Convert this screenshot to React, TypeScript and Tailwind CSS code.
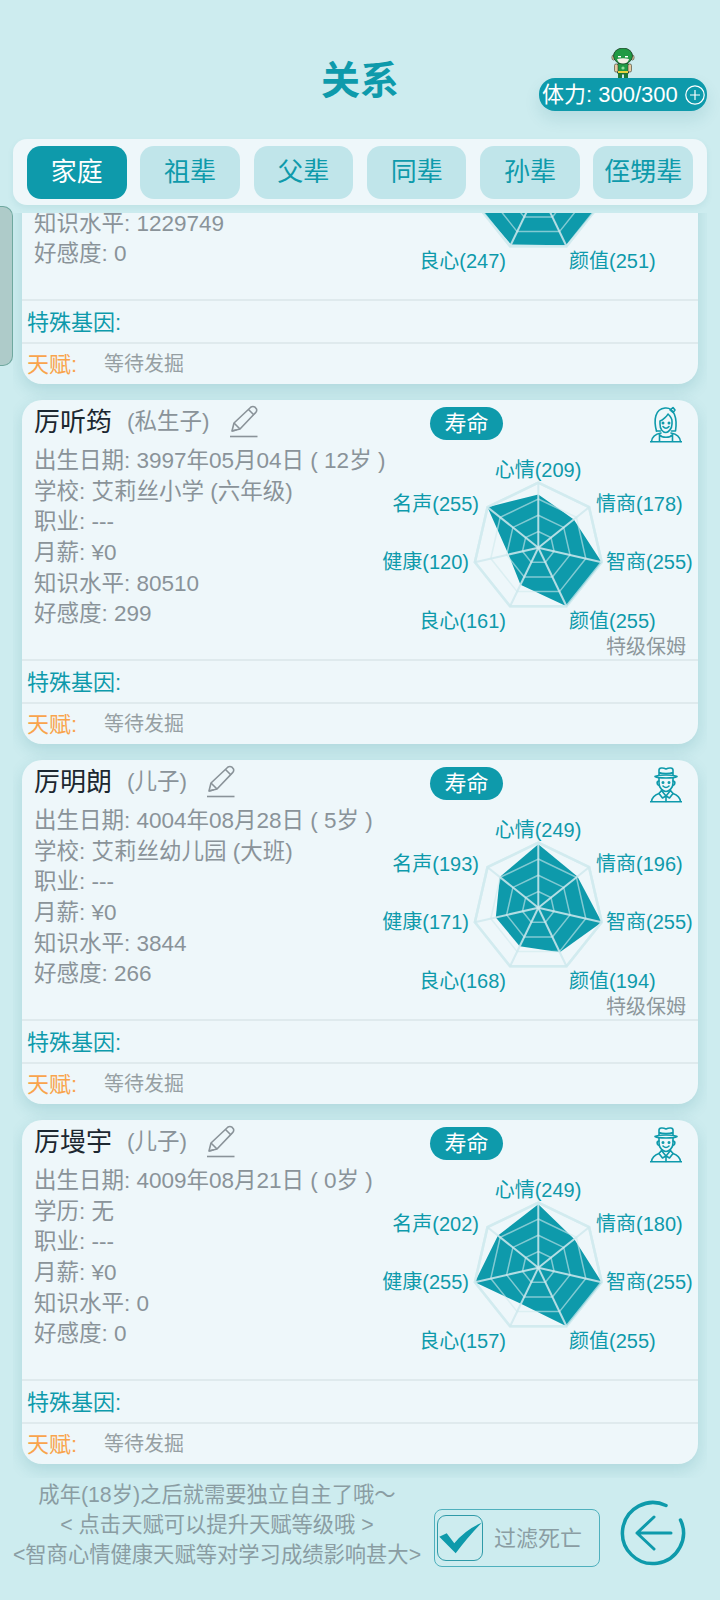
const TEAL = "#0e9aab";
const AXES = ["心情", "情商", "智商", "颜值", "良心", "健康", "名声"];

// text anchor + position per axis, same order as AXES
const LABELS: { x: number; y: number; anchor: "start" | "middle" | "end" }[] = [
  { x: 170, y: 30, anchor: "middle" },
  { x: 228, y: 64, anchor: "start" },
  { x: 238, y: 122, anchor: "start" },
  { x: 201, y: 181, anchor: "start" },
  { x: 138, y: 181, anchor: "end" },
  { x: 101, y: 122, anchor: "end" },
  { x: 111, y: 64, anchor: "end" },
];

interface Member {
  name?: string;
  relation?: string;
  lines: string[];
  stats: number[];
  avatar?: "girl" | "man";
  nanny?: boolean;
  // scrolled under the tabs, only the lower part shows
  clipped?: boolean;
}

const members: Member[] = [
  {
    lines: ["", "", "", "", "知识水平: 1229749", "好感度: 0"],
    stats: [255, 255, 255, 251, 247, 255, 255],
    clipped: true,
  },
  {
    name: "厉听筠",
    relation: "(私生子)",
    lines: ["出生日期: 3997年05月04日 ( 12岁 )", "学校: 艾莉丝小学 (六年级)", "职业: ---", "月薪: ¥0", "知识水平: 80510", "好感度: 299"],
    stats: [209, 178, 255, 255, 161, 120, 255],
    avatar: "girl",
    nanny: true,
  },
  {
    name: "厉明朗",
    relation: "(儿子)",
    lines: ["出生日期: 4004年08月28日 ( 5岁 )", "学校: 艾莉丝幼儿园 (大班)", "职业: ---", "月薪: ¥0", "知识水平: 3844", "好感度: 266"],
    stats: [249, 196, 255, 194, 168, 171, 193],
    avatar: "man",
    nanny: true,
  },
  {
    name: "厉墁宇",
    relation: "(儿子)",
    lines: ["出生日期: 4009年08月21日 ( 0岁 )", "学历: 无", "职业: ---", "月薪: ¥0", "知识水平: 0", "好感度: 0"],
    stats: [249, 180, 255, 255, 157, 255, 202],
    avatar: "man",
  },
];

function polygon(cx: number, cy: number, r: number, values?: number[]) {
  return AXES.map((_, i) => {
    const a = (-90 + (i * 360) / 7) * (Math.PI / 180);
    const k = values ? values[i] / 255 : 1;
    return `${(cx + r * k * Math.cos(a)).toFixed(1)},${(cy + r * k * Math.sin(a)).toFixed(1)}`;
  }).join(" ");
}

function Radar({ member }: { member: Member }) {
  const { stats, nanny, clipped } = member;
  const cx = 170.3;
  const cy = 107.7;
  const R = 65;
  const outer = polygon(cx, cy, R).split(" ");

  return (
    <svg width="330" height="220" viewBox="0 0 330 220" className="absolute left-[346px] top-[40px]">
      <polygon points={polygon(cx, cy, R)} fill="none" stroke="#d2ebef" strokeWidth="2.5" />
      <polygon points={polygon(cx, cy, R, stats)} fill={TEAL} />
      {[0.25, 0.5, 0.75].map((k) => (
        <polygon key={k} points={polygon(cx, cy, R * k)} fill="none" stroke="#cfe9ed" strokeOpacity="0.6" strokeWidth="1.5" />
      ))}
      <polygon points={polygon(cx, cy, R)} fill="none" stroke="#d2ebef" strokeOpacity="0.7" strokeWidth="2.5" />
      {outer.map((p) => {
        const [x, y] = p.split(",");
        return <line key={p} x1={cx} y1={cy} x2={x} y2={y} stroke="#cfe9ed" strokeOpacity="0.85" strokeWidth="2" />;
      })}
      {LABELS.map((l, i) =>
        clipped && i !== 3 && i !== 4 ? null : (
          <text key={AXES[i]} x={l.x} y={l.y} textAnchor={l.anchor} dominantBaseline="central" fontSize="20" fill={TEAL}>
            {AXES[i]}({stats[i]})
          </text>
        ),
      )}
      {nanny && (
        <text x="318" y="207" textAnchor="end" dominantBaseline="central" fontSize="20" fill="#8d979c">
          特级保姆
        </text>
      )}
    </svg>
  );
}

function Pencil() {
  return (
    <svg width="28" height="33" viewBox="0 0 28 33" fill="none" stroke="#8a9399" strokeWidth="1.6" strokeLinejoin="round">
      <path d="M2 26 L4 18 L21 2 Q23 0.8 25 2.2 L26.5 4 Q27.2 6 25.6 7.6 L10 24 Z" />
      <path d="M4 18 L10 24 M2 26 L6.5 25 M18.5 4.5 L24 10" />
      <path d="M0 31.5 H27.5" />
    </svg>
  );
}

function Avatar({ kind }: { kind: "girl" | "man" }) {
  return (
    <svg width="32" height="37" viewBox="0 0 32 37" fill="none" stroke={TEAL} strokeWidth="1.6" strokeLinecap="round" strokeLinejoin="round">
      {kind === "girl" ? (
        <>
          <path d="M6.5 25 C3.5 14 5 3 15 2 C24 1 27.5 12 25.5 25 H21.5" />
          <path d="M6.5 25 H10.5" />
          <path d="M10 15 C13 14 17 10 18 8 C20 10 22 12 22 15 V18 C22 23 18 26.5 16 26.5 C12.5 26.5 10 23 10 18 Z" />
          <path d="M20 4 L23 1.5 L25 4 L23 6.5 Z" />
          <path d="M13 20.5 Q16 24 19 20.5" />
          <circle cx="13" cy="17" r="0.7" />
          <circle cx="19" cy="17" r="0.7" />
          <path d="M1.5 35.5 C2 30 6 28 11 27 M21 27 C26 28 30 30 30.5 35.5 M9.5 35 V28.5 M22.5 35 V28.5 M10 29 C12 32 20 32 22 29" />
          <path d="M0 35.8 H32" />
        </>
      ) : (
        <>
          <path d="M5 10.5 C8 8.5 24 8.5 27 10.5 C24 12.5 8 12.5 5 10.5 Z" />
          <path d="M9 9 V4 C9 1.5 13 1.5 16 3 C19 1.5 23 1.5 23 4 V9 M9 6.5 C12 8 20 8 23 6.5" />
          <path d="M9 12 V17 C9 22 13 25.5 16 25.5 C19 25.5 23 22 23 17 V12" />
          <path d="M9 15 C6.5 15 6.5 19 9 19.5 M23 15 C25.5 15 25.5 19 23 19.5" />
          <path d="M13 20 Q16 23 19 20" />
          <circle cx="13" cy="16.5" r="0.7" />
          <circle cx="19" cy="16.5" r="0.7" />
          <path d="M11.5 24.5 L16 30 L20.5 24.5 M11.5 24.5 L9 27.5 L12.5 32 L16 30 L19.5 32 L23 27.5 L20.5 24.5 M16 30 V35.5" />
          <path d="M1.5 35.5 C2 31 5 29 9 27.5 M23 27.5 C27 29 30 31 30.5 35.5 M0 35.8 H32" />
        </>
      )}
    </svg>
  );
}

function MemberCard({ member }: { member: Member }) {
  return (
    <div
      className={`${member.clipped ? "mt-[-173px]" : "mt-[16px]"} mx-[9px] h-[344px] rounded-[20px] bg-[#eef7fa] shadow-[0_6px_16px_rgba(20,110,125,0.16)]`}
    >
      <div className="relative h-[259px] pl-3">
        <div className="flex h-[44px] items-center">
          {!member.clipped && (
            <>
              <div className="flex w-[396px] items-center">
                <span className="text-[26px] text-[#1c2730]">{member.name}</span>
                <span className="ml-[15px] text-[22.5px] text-[#8a9399]">{member.relation}</span>
                <span className="ml-[20px] -mt-[2px]">
                  <Pencil />
                </span>
              </div>
              <div className="mt-[2px] flex h-[33px] w-[73px] items-center justify-center rounded-full bg-[#0e9aab] text-[22px] text-white">
                寿命
              </div>
              <div className="ml-auto mr-4 mt-[4px]">
                <Avatar kind={member.avatar ?? "man"} />
              </div>
            </>
          )}
        </div>
        <div className="mt-[2px] text-[22.5px] leading-[30.67px] whitespace-nowrap text-[#8a9399]">
          {member.lines.map((line, i) => (
            <div key={i} className="h-[30.67px]">
              {line}
            </div>
          ))}
        </div>
        <Radar member={member} />
      </div>
      <div className="flex h-[43px] items-center border-t-2 border-[#dfeaed] pt-px pl-[5px] text-[22px] text-[#0e9aab]">特殊基因:</div>
      <div className="flex h-[42px] items-center border-t-2 border-[#dfeaed] pl-[5px]">
        <span className="w-[77px] text-[22px] text-[#f9a44c]">天赋:</span>
        <span className="text-[20px] text-[#969fa3]">等待发掘</span>
      </div>
    </div>
  );
}

export default function App() {
  const tabs = ["家庭", "祖辈", "父辈", "同辈", "孙辈", "侄甥辈"];

  return (
    <div className="relative flex h-[1600px] w-[720px] flex-col overflow-hidden bg-[#cdecef] font-['Liberation_Sans','Noto_Sans_CJK_SC',sans-serif]">
      {/* header */}
      <div className="grid h-[139px] shrink-0 grid-cols-[1fr_auto_1fr]">
        <div />
        <div className="pt-[61px] text-[39px] leading-none font-bold text-[#0e9aab]">关系</div>
        <div className="flex flex-col items-end pr-[13px] pt-[48px]">
          <svg width="26" height="30" viewBox="0 0 26 30" className="mr-[71px]">
            <rect x="7" y="15" width="12" height="11" rx="3" fill="#1f9a44" stroke="#1d3a24" strokeWidth="0.8" />
            <rect x="4.5" y="16" width="3.5" height="8" rx="1.5" fill="#e6c9a0" stroke="#3b3a2a" strokeWidth="0.6" />
            <rect x="18" y="16" width="3.5" height="8" rx="1.5" fill="#e6c9a0" stroke="#3b3a2a" strokeWidth="0.6" />
            <rect x="8" y="23" width="10" height="2" fill="#e8d23c" />
            <rect x="8" y="25.5" width="4" height="4.5" fill="#1f7a38" />
            <rect x="14" y="25.5" width="4" height="4.5" fill="#1f7a38" />
            <circle cx="13" cy="20" r="1.6" fill="#8fdc9a" />
            <ellipse cx="3.5" cy="9.5" rx="1.6" ry="2.6" fill="#e6c9a0" stroke="#3b3a2a" strokeWidth="0.6" />
            <ellipse cx="22.5" cy="9.5" rx="1.6" ry="2.6" fill="#e6c9a0" stroke="#3b3a2a" strokeWidth="0.6" />
            <ellipse cx="13" cy="8" rx="9.5" ry="8" fill="#1f9a44" stroke="#1d3a24" strokeWidth="0.8" />
            <path d="M7 11 Q13 9.5 19 11 Q18 15.5 13 15.5 Q8 15.5 7 11 Z" fill="#f4efe6" />
            <rect x="8" y="8" width="3" height="1.4" fill="#ffffff" />
            <rect x="15" y="8" width="3" height="1.4" fill="#ffffff" />
          </svg>
          <div className="flex h-[33px] w-[168px] items-center justify-between rounded-[16px] bg-[#0e9aab] pl-[3px] pr-[2px] text-[22px] text-white shadow-[0_8px_16px_rgba(20,110,125,0.12)]">
            <span className="whitespace-nowrap">体力: 300/300</span>
            <svg width="20" height="20" viewBox="0 0 20 20" fill="none" stroke="#ffffff" strokeWidth="1.2">
              <circle cx="10" cy="10" r="9.2" />
              <path d="M10 5 V15 M5 10 H15" />
            </svg>
          </div>
        </div>
      </div>

      {/* tabs */}
      <div className="z-10 mx-[13px] flex h-[66px] shrink-0 items-center gap-[13.6px] rounded-[14px] bg-[#eef7fa] px-[14px] shadow-[0_3px_6px_rgba(20,110,125,0.08)]">
        {tabs.map((tab, i) => (
          <div
            key={tab}
            className={`flex h-[53px] flex-1 items-center justify-center rounded-[14px] text-[26px] ${
              i === 0 ? "bg-[#0e9aab] text-white" : "bg-[#c0e5ea] text-[#0e9aab]"
            }`}
          >
            {tab}
          </div>
        ))}
      </div>

      {/* list */}
      <div className="mx-[13px] mt-[8px] h-[1265px] shrink-0 overflow-hidden">
        {members.map((m, i) => (
          <MemberCard key={i} member={m} />
        ))}
      </div>

      {/* footer */}
      <div className="flex items-start">
        <div className="mt-[2px] w-[434px] text-center text-[21.3px] leading-[30px] whitespace-nowrap text-[#8a9da3]">
          <div>成年(18岁)之后就需要独立自主了哦～</div>
          <div>&lt; 点击天赋可以提升天赋等级哦 &gt;</div>
          <div>&lt;智商心情健康天赋等对学习成绩影响甚大&gt;</div>
        </div>
        <div className="mt-[31px] flex h-[58px] w-[166px] items-center rounded-[8px] border-[1.5px] border-[#4fb0bd] pl-[2px]">
          <div className="h-[46px] w-[46px] rounded-[9px] border-[1.5px] border-[#2f9aa8]">
            <svg width="46" height="46" viewBox="0 0 46 46" className="-m-[1.5px]">
              <path d="M2.3 21.7 L9.7 18.3 L17.3 28.3 Q28 15 44.7 7.7 Q29.7 23.3 18.7 38.3 Z" fill="#0e9aab" />
            </svg>
          </div>
          <span className="ml-[11px] text-[22px] text-[#8a9da3]">过滤死亡</span>
        </div>
        <svg width="68" height="68" viewBox="0 0 68 68" fill="none" stroke="#0e9aab" strokeLinecap="round" strokeLinejoin="round" className="ml-[19px] mt-[21px]">
          <path d="M47 6.5 A30.5 30.5 0 1 0 61.5 21" strokeWidth="3.5" />
          <path d="M35 18 L18 34 L35 50 M18 34 H52" strokeWidth="3" />
        </svg>
      </div>

      {/* side handle */}
      <div className="absolute left-0 top-[206px] h-[160px] w-[13px] rounded-r-[10px] border border-l-0 border-[#6fa89f] bg-[#aecbc9]" />
    </div>
  );
}
